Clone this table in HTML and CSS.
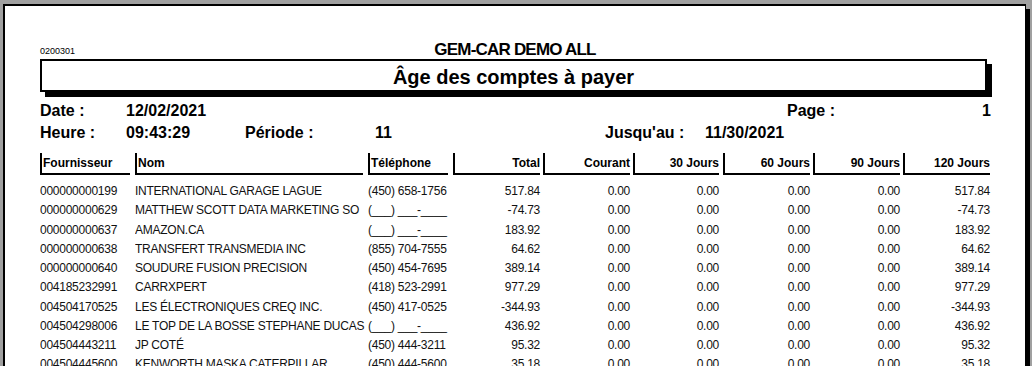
FILE: index.html
```html
<!DOCTYPE html>
<html lang="fr">
<head>
<meta charset="utf-8">
<title>Âge des comptes à payer</title>
<link rel="stylesheet" href="styles.css">
</head>
<body>
<div class="page">
  <div class="top-line">
    <span class="code">0200301</span>
    <span class="company">GEM-CAR DEMO ALL</span>
    <span></span>
  </div>
  <div class="title-box">Âge des comptes à payer</div>

  <div class="info-row">
    <span class="w86">Date :</span>
    <span class="grow">12/02/2021</span>
    <span class="page-no"><span>Page :</span><span>1</span></span>
  </div>
  <div class="info-row">
    <span class="w86">Heure :</span>
    <span class="w119">09:43:29</span>
    <span class="w130">Période :</span>
    <span class="w230">11</span>
    <span class="w100">Jusqu'au :</span>
    <span>11/30/2021</span>
  </div>

  <div class="grid head">
    <div class="h l m5">Fournisseur</div>
    <div class="h l m5">Nom</div>
    <div class="h l m5">Téléphone</div>
    <div class="h r">Total</div>
    <div class="h r">Courant</div>
    <div class="h r m4">30 Jours</div>
    <div class="h r">60 Jours</div>
    <div class="h r">90 Jours</div>
    <div class="h r m0">120 Jours</div>
  </div>

  <div class="rows">
    <div class="grid row"><div class="c">000000000199</div><div class="c name">INTERNATIONAL GARAGE LAGUE</div><div class="c">(450) 658-1756</div><div class="n">517.84</div><div class="n">0.00</div><div class="n m4">0.00</div><div class="n">0.00</div><div class="n">0.00</div><div class="n m0">517.84</div></div>
    <div class="grid row"><div class="c">000000000629</div><div class="c name">MATTHEW SCOTT DATA MARKETING SO</div><div class="c">(___) ___-____</div><div class="n">-74.73</div><div class="n">0.00</div><div class="n m4">0.00</div><div class="n">0.00</div><div class="n">0.00</div><div class="n m0">-74.73</div></div>
    <div class="grid row"><div class="c">000000000637</div><div class="c name">AMAZON.CA</div><div class="c">(___) ___-____</div><div class="n">183.92</div><div class="n">0.00</div><div class="n m4">0.00</div><div class="n">0.00</div><div class="n">0.00</div><div class="n m0">183.92</div></div>
    <div class="grid row"><div class="c">000000000638</div><div class="c name">TRANSFERT TRANSMEDIA INC</div><div class="c">(855) 704-7555</div><div class="n">64.62</div><div class="n">0.00</div><div class="n m4">0.00</div><div class="n">0.00</div><div class="n">0.00</div><div class="n m0">64.62</div></div>
    <div class="grid row"><div class="c">000000000640</div><div class="c name">SOUDURE FUSION PRECISION</div><div class="c">(450) 454-7695</div><div class="n">389.14</div><div class="n">0.00</div><div class="n m4">0.00</div><div class="n">0.00</div><div class="n">0.00</div><div class="n m0">389.14</div></div>
    <div class="grid row"><div class="c">004185232991</div><div class="c name">CARRXPERT</div><div class="c">(418) 523-2991</div><div class="n">977.29</div><div class="n">0.00</div><div class="n m4">0.00</div><div class="n">0.00</div><div class="n">0.00</div><div class="n m0">977.29</div></div>
    <div class="grid row"><div class="c">004504170525</div><div class="c name">LES ÉLECTRONIQUES CREQ INC.</div><div class="c">(450) 417-0525</div><div class="n">-344.93</div><div class="n">0.00</div><div class="n m4">0.00</div><div class="n">0.00</div><div class="n">0.00</div><div class="n m0">-344.93</div></div>
    <div class="grid row"><div class="c">004504298006</div><div class="c name">LE TOP DE LA BOSSE STEPHANE DUCAS</div><div class="c">(___) ___-____</div><div class="n">436.92</div><div class="n">0.00</div><div class="n m4">0.00</div><div class="n">0.00</div><div class="n">0.00</div><div class="n m0">436.92</div></div>
    <div class="grid row"><div class="c">004504443211</div><div class="c name">JP COTÉ</div><div class="c">(450) 444-3211</div><div class="n">95.32</div><div class="n">0.00</div><div class="n m4">0.00</div><div class="n">0.00</div><div class="n">0.00</div><div class="n m0">95.32</div></div>
    <div class="grid row"><div class="c">004504445600</div><div class="c name">KENWORTH MASKA CATERPILLAR</div><div class="c">(450) 444-5600</div><div class="n">35.18</div><div class="n">0.00</div><div class="n m4">0.00</div><div class="n">0.00</div><div class="n">0.00</div><div class="n m0">35.18</div></div>
  </div>
</div>
</body>
</html>
```

FILE: styles.css
```css
html, body {
  margin: 0;
  padding: 0;
}
body {
  background: #a0a0a0;
  overflow: hidden;
  width: 1032px;
  height: 366px;
  font-family: "Liberation Sans", Arial, sans-serif;
  color: #000;
}
.page {
  box-sizing: border-box;
  margin: 4px 0 0 3px;
  width: 1023px;
  min-height: 420px;
  background: #fff;
  border-top: 2px solid #000;
  border-left: 2px solid #000;
  border-right: 1px solid #000;
  box-shadow: 4px 5px 0 #000;
  padding: 35px 35px 0 35px;
}
.top-line {
  display: grid;
  grid-template-columns: 1fr auto 1fr;
  height: 18px;
}
.code {
  font-size: 9px;
  line-height: 10px;
  margin-top: 5px;
}
.company {
  font-size: 17px;
  font-weight: bold;
  letter-spacing: -0.8px;
  line-height: 18px;
}
.title-box {
  box-sizing: border-box;
  width: 947px;
  height: 33px;
  border: 2px solid #000;
  box-shadow: 5px 5px 0 #000;
  padding-top: 3px;
  text-align: center;
  font-size: 20px;
  font-weight: bold;
  line-height: 26px;
}
.info-row {
  display: flex;
  height: 22px;
  font-size: 16px;
  font-weight: bold;
  line-height: 22px;
  white-space: nowrap;
}
.title-box + .info-row { margin-top: 8px; }
.w86 { width: 86px; }
.w119 { width: 119px; }
.w130 { width: 130px; }
.w230 { width: 230px; }
.w100 { width: 100px; }
.grow { flex: 1; }
.page-no {
  display: flex;
  justify-content: space-between;
  width: 204px;
  margin-right: -1px;
}
.grid {
  display: grid;
  grid-template-columns: 95px 233px 85px 90px 90px 90px 90px 90px 87px;
}
.head {
  margin-top: 9px;
  height: 22px;
}
.h {
  box-sizing: border-box;
  height: 22px;
  border-left: 2px solid #000;
  border-bottom: 2px solid #000;
  margin-right: 3px;
  font-size: 12px;
  font-weight: bold;
  line-height: 20px;
  white-space: nowrap;
}
.h.l { padding-left: 1px; }
.h.r { text-align: right; }
.m5 { margin-right: 5px; }
.m4 { margin-right: 4px; }
.h.m0, .n.m0 { margin-right: 0; }
.rows {
  margin-top: 7px;
}
.row {
  height: 19.25px;
  font-size: 12px;
  line-height: 19.25px;
  letter-spacing: -0.25px;
  color: #111;
  white-space: nowrap;
}
.c {
  overflow: hidden;
}
.name {
  margin-right: 2px;
}
.n {
  text-align: right;
  margin-right: 3px;
}
.n.m4 { margin-right: 4px; }
```
